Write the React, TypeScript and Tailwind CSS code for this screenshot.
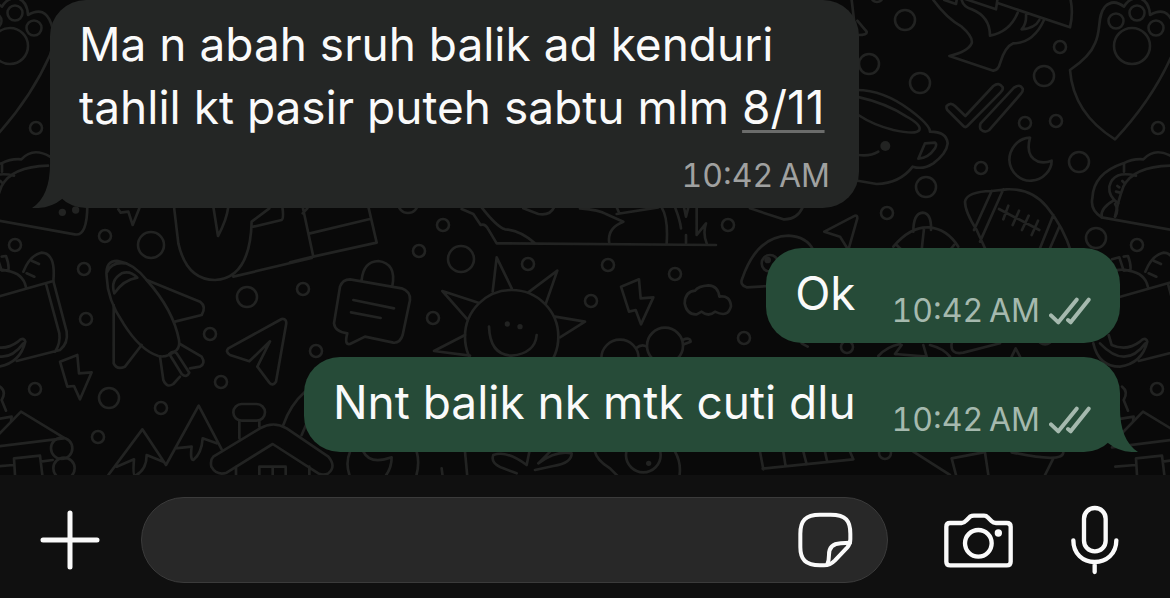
import type { ReactNode } from "react";

type Circle = [x: number, y: number, r: number];

const bubbles: Circle[] = [
  [105, 236, 6], [84, 269, 6], [86, 319, 6], [210, 334, 6], [221, 382, 6],
  [161, 408, 6], [98, 437, 6], [303, 289, 6], [151, 245, 13], [247, 297, 10],
  [109, 398, 10], [443, 225, 6], [419, 251, 6], [461, 259, 13], [528, 264, 6],
  [433, 318, 6], [316, 351, 6], [408, 203, 10], [591, 301, 6], [728, 225, 6],
  [608, 265, 6], [675, 274, 6], [744, 338, 6], [847, 347, 6], [905, 20, 10],
  [869, 64, 10], [920, 83, 10], [1060, 47, 6], [1044, 76, 10], [1025, 123, 6],
  [1056, 121, 6], [1079, 162, 10], [981, 168, 6], [926, 187, 10], [887, 213, 6],
  [1096, 238, 10], [885, 453, 6], [877, -4, 6],
];

// Everything that shows up at both edges of the wallpaper, one period apart
function EdgeDoodles() {
  return (
    <>
      <g strokeWidth="2.6">
        <circle cx="36" cy="128" r="6" />
        <circle cx="15" cy="245" r="6" />
        <circle cx="35" cy="389" r="6" />
        <circle cx="10" cy="46" r="18" />
        <circle cx="15" cy="13" r="7.5" />
        <circle cx="34" cy="28" r="7.5" />
        <circle cx="-6" cy="21" r="7.5" />
      </g>
      <g transform="translate(-272 0) scale(.33333)">
        <path d="M795 418Q670 340 660 210Q720 170 735 130C755 90 740 50 765 20Q790 -5 822 20Q840 -10 870 -5Q898 5 900 45Q950 15 970 72Q985 110 966 165Q906 300 795 418Z" />
        <path d="M755 652Q720 630 727 595Q730 520 820 490Q850 475 880 478Q915 440 966 470L1010 470M795 650Q805 600 820 560Q850 500 960 497M755 652L1040 703Q1078 710 1078 615" />
        <path d="M858 527Q790 510 778 560Q775 590 805 610M822 490V515M755 652Q750 625 790 602M795 650Q808 630 795 612M802 558L808 562M798 575L810 578M817 543L824 550" />
        <g fill="#222322" stroke="none">
          <circle cx="1003" cy="637" r="11" />
          <circle cx="1043" cy="630" r="11" />
        </g>
      </g>
      <g transform="translate(0 200) scale(.33333)">
        <path d="M-50 303L160 243Q168 160 125 158Q90 165 70 215M-30 215Q-5 205 20 212Q70 220 78 262M95 182L117 192M80 220L103 230M5 170L18 168Q28 195 25 210L5 212L-8 172L-30 178" />
        <path d="M160 243L200 395Q205 430 180 450L50 483M138 252L178 400Q182 430 165 455" />
        <path d="M-86 430Q-70 500 -6 500Q60 490 76 425Q70 408 54 425Q14 455 -31 435L-40 405M-66 430Q10 510 70 430" />
        <path d="M180 485L232 465L237 520L275 517L240 598L222 558L202 560Z" />
        <path d="M-20 720L63 635L190 712M-30 742L190 715M-20 800L40 795M45 825L42 775L120 767L127 825M122 785L158 780" />
        <path d="M0 560Q20 575 5 600L18 632M-15 658L35 650L33 665" />
        <circle cx="185" cy="745" r="32" />
        <circle cx="192" cy="805" r="32" />
      </g>
    </>
  );
}

function Wallpaper() {
  return (
    <svg
      className="absolute inset-0 h-full w-full"
      viewBox="0 0 1170 475"
      preserveAspectRatio="xMidYMin slice"
      fill="none"
      stroke="#222322"
      strokeWidth="8"
      strokeLinecap="round"
      strokeLinejoin="round"
      aria-hidden="true"
    >
      {bubbles.map(([x, y, r]) => (
        <circle key={`${x}-${y}`} cx={x} cy={y} r={r} strokeWidth="2.6" />
      ))}

      <EdgeDoodles />
      <g transform="translate(1122 0)">
        <EdgeDoodles />
      </g>

      {/* bird, ticks, cup, moon, football */}
      <g transform="translate(850 0) scale(.33333)">
        <path d="M250 0Q290 55 335 80Q370 110 365 130Q355 155 298 168L430 212Q445 210 450 190Q465 140 490 130Q550 130 582 60M335 0Q340 20 365 28Q420 50 420 107Q480 95 503 38M445 10L660 82Q670 40 662 0M340 -5L438 28L442 0M528 45Q530 70 515 88Q555 85 568 60M283 0L318 12L320 0" />
        <path d="M5 0L12 60M22 62L50 95Q52 105 25 105" />
        <path d="M290 318Q302 305 315 318L346 348L430 258Q447 245 458 262Q460 270 452 277L352 378Q346 384 340 378L292 330Q288 324 290 318ZM392 370L492 263Q510 250 518 266Q520 274 513 281L418 390Q404 400 392 388Q388 380 392 370Z" />
        <path d="M20 270Q100 270 180 330Q240 375 240 395Q290 395 293 430Q290 460 250 490Q220 510 188 500Q150 550 80 552L10 540M20 290Q110 310 170 350Q215 375 208 390Q200 405 130 390Q70 375 25 345M225 430L255 428Q262 432 255 445Q235 475 205 476ZM25 465Q60 470 85 455" />
        <circle cx="106" cy="438" r="15" fill="#222322" stroke="none" />
        <path d="M540 413C500 415 478 450 478 480C480 520 515 545 545 542C580 540 605 510 605 482Q585 490 565 485Q525 470 540 413Z" />
        <path d="M405 745L380 690Q345 635 345 605Q350 575 425 573L470 568Q545 565 590 620Q640 680 665 760M425 573L372 690M460 568L390 725M610 645L570 745M628 680L600 745M447 627L568 690M475 617L460 658M507 632L488 675M536 647L516 690M564 662L545 705" />
        <path d="M190 695Q190 640 218 638Q245 640 243 690M130 740Q180 680 235 682Q290 685 325 740M222 685L215 750M140 735L155 750M312 735L300 750" />
      </g>

      {/* rocket, paper plane, trees, cabin */}
      <g transform="translate(0 200) scale(.33333)">
        <path d="M320 230Q315 180 355 183Q400 190 440 240Q520 330 537 420Q540 440 530 450Q500 475 475 468Q420 450 370 370Q322 300 320 230ZM343 280Q330 240 365 220Q390 210 412 233Q370 240 343 280ZM322 215Q335 185 375 190" />
        <path d="M440 240L600 305Q620 320 605 345L525 365M341 315V490Q350 510 375 500L425 435M480 470L490 540Q500 565 520 552L540 530M540 432L605 470Q618 490 600 500L570 505M508 462L545 522Q560 535 568 518L530 460Q518 450 508 462" />
        <path d="M685 445L845 357Q862 355 858 375L828 545Q818 560 808 548L772 500L810 424L748 484L690 465Q675 455 685 445Z" />
        <path d="M522 20L535 130Q560 240 645 240Q750 235 755 65L808 25M640 20L654 108Q680 60 685 20M760 80L845 60Q852 55 847 20M700 230L935 174M355 28L362 38L385 35L398 75L418 25" />
        <path d="M325 825L427 688L498 795L596 617L665 748M350 800L402 778Q398 825 405 828Q440 810 440 765L490 785M525 745L575 740Q570 780 580 780Q605 760 608 715L650 730" />
        <path d="M640 770L780 685Q820 662 860 685L985 770Q1010 800 985 820Q970 828 955 820L818 732L680 818Q650 828 634 800Q630 780 640 770ZM718 662V715M778 662V680M708 800V825M778 825V800H857V825M818 800V825M928 800V825M850 675Q870 615 915 575M905 705L920 670" />
        <rect x="700" y="612" width="95" height="50" rx="25" />
      </g>

      {/* lock chat, mountain base, sun */}
      <g transform="translate(290 200) scale(.33333)">
        <path d="M38 20L70 170L0 187M235 20L260 128L70 170M60 100L240 57M38 40L52 25" />
        <path d="M215 240Q220 185 265 183Q320 190 307 258M180 238L335 265Q362 275 360 300L338 405Q330 430 310 428L225 410L180 432Q162 435 172 400Q135 395 132 370L150 260Q158 238 180 238ZM190 300L312 325M183 337L272 354" />
        <path d="M515 27L550 42L572 75Q585 70 595 88L620 130L1278 135M575 22Q620 80 645 88Q690 90 735 130M700 25L745 42Q780 48 792 22" />
        <circle cx="665" cy="410" r="140" />
        <path d="M608 275L620 172L665 265M715 277L802 212L767 312M795 350L885 365L810 412M565 308L457 273L532 358M525 405L432 453L540 467M597 380Q600 465 665 467Q735 460 740 405" />
        <g fill="#222322" stroke="none">
          <circle cx="652" cy="372" r="8" />
          <circle cx="690" cy="380" r="8" />
        </g>
      </g>

      {/* grass, cloud, bolt, glasses, whale */}
      <g transform="translate(580 200) scale(.33333)">
        <path d="M0 25Q60 30 78 42L130 65Q80 85 88 130M110 42L235 22M110 22L118 40M245 22Q265 55 260 130M285 22Q300 60 303 85M312 22L318 50L325 22M318 105V130M350 22V105L378 70Q368 100 380 130M510 25L610 58Q650 60 668 22" />
        <path d="M123 260L177 238L182 295L220 292L183 373L167 330L147 335Z" />
        <path d="M345 272Q315 275 314 310Q320 345 350 343L365 335Q385 352 405 335Q445 355 453 318Q450 285 418 290Q415 258 385 256Q355 258 345 272Z" />
        <circle cx="120" cy="475" r="56" />
        <circle cx="255" cy="437" r="54" />
        <path d="M168 445Q185 430 200 440M308 420Q330 410 332 425L312 433" />
        <path d="M570 258L500 262Q478 255 487 235Q530 110 625 107Q680 110 700 150M733 95L825 47Q832 45 832 55L805 150L780 110ZM665 430L683 440" />
        <circle cx="570" cy="190" r="25" />
        <circle cx="563" cy="180" r="10" fill="#222322" stroke="none" />
      </g>

      {/* strip between and below the outgoing messages */}
      <g transform="translate(750 230) scale(.33333)">
        <path d="M385 378Q410 350 450 342M435 372L455 345M435 372L530 380L520 345M540 345Q580 355 600 380M605 340Q600 375 640 368L750 340M785 380L797 355L810 380M870 338Q885 348 900 338" />
        <path d="M30 665L40 718M100 665L107 710M160 665L170 703M225 665L232 697M300 665L310 688L38 716M490 665L600 735M605 685L700 667M605 685L618 735M785 667Q940 700 940 667M910 685L885 735M705 667L715 735" />
      </g>
      <g transform="translate(290 340) scale(.33333)">
        <path d="M180 335Q165 370 180 410M220 335Q240 375 305 352Q305 385 285 410M380 335Q390 370 378 410M525 335L532 410M455 385L458 410M680 400L640 385Q600 370 610 345Q650 330 710 375L718 335M745 370L780 335M745 370Q800 330 845 340Q845 370 790 378L735 390M915 335Q920 360 960 385L985 410M1155 335Q1175 370 1168 410" />
        <circle cx="1060" cy="345" r="52" />
        <circle cx="1076" cy="370" r="8" fill="#222322" stroke="none" />
      </g>
    </svg>
  );
}

function Tail({ className }: { className: string }) {
  return (
    <svg
      className={`absolute bottom-0 h-12 w-10 ${className}`}
      viewBox="0 0 40 48"
      fill="currentColor"
      aria-hidden="true"
    >
      <path d="M18 0Q19 36 0 48Q18 49 30 39L40 30V0Z" />
    </svg>
  );
}

function ReadTicks() {
  return (
    <svg
      className="ml-[9px] h-7 w-[42px]"
      viewBox="898 195 126 84"
      fill="none"
      stroke="currentColor"
      strokeWidth="12"
      strokeLinecap="round"
      strokeLinejoin="round"
      role="img"
      aria-label="Delivered"
    >
      <path d="M904 250L926 271L981 203M955 264L963 271L1017 203" />
    </svg>
  );
}

interface OutgoingProps {
  children: ReactNode;
  time: string;
  tail?: boolean;
}

function Outgoing({ children, time, tail = false }: OutgoingProps) {
  return (
    <li className="relative flex items-end self-end rounded-[36px] bg-[#264b38] pt-[14px] pr-[29px] pb-[18px] pl-[29px]">
      <p className="mr-9">{children}</p>
      <div className="flex shrink-0 text-[32px] leading-7 text-[#a5b9ae] tabular-nums">
        <time>{time}</time>
        <ReadTicks />
      </div>
      {tail && <Tail className="-right-[18px] -scale-x-100 text-[#264b38]" />}
    </li>
  );
}

function Composer() {
  return (
    <footer className="flex items-center bg-[#101010] pt-[22px] pr-[51px] pb-[15px] pl-10">
      <button type="button" aria-label="Attach" className="text-[#fafafa]">
        <svg className="size-[60px]" viewBox="0 0 60 60" fill="none" stroke="currentColor" strokeWidth="5" strokeLinecap="round">
          <path d="M30 3V57M3 30H57" />
        </svg>
      </button>
      <div className="mr-14 ml-[41px] flex h-[86px] min-w-0 flex-1 items-center rounded-full border border-[#3b3b3b] bg-[#282828] pr-[34px] pl-8">
        <input
          type="text"
          aria-label="Message"
          className="min-w-0 flex-1 bg-transparent text-[#fafafa] outline-none"
        />
        <button type="button" aria-label="Stickers" className="text-[#fafafa]">
          <svg className="h-14 w-[55px]" viewBox="114 130 165 168" fill="none" stroke="currentColor" strokeWidth="12" strokeLinecap="round" strokeLinejoin="round">
            <path d="M180 138H212C258 138 271 156 271 195V212Q271 226 262 236L225 275Q210 290 192 290H180C136 290 121 272 121 235V195C121 156 136 138 180 138Z" />
            <path d="M270 222L242 224Q207 226 207 258Q207 275 202 287" />
          </svg>
        </button>
      </div>
      <button type="button" aria-label="Camera" className="mr-[58px] text-[#fafafa]">
        <svg className="h-[55px] w-[69px]" viewBox="552 127 207 165" fill="none" stroke="currentColor" strokeWidth="13" strokeLinejoin="round">
          <path d="M570 157H605Q612 157 618 150L630 138Q635 135 642 135H672Q679 135 683 140L695 152Q700 157 708 157H740Q752 157 752 168V273Q752 284 740 284H571Q559 284 559 273V168Q559 157 570 157Z" />
          <circle cx="655" cy="218" r="40" />
          <circle cx="715" cy="187" r="11" fill="currentColor" stroke="none" />
        </svg>
      </button>
      <button type="button" aria-label="Record voice message" className="text-[#fafafa]">
        <svg className="h-[70px] w-12" viewBox="934 103 144 210" fill="none" stroke="currentColor" strokeWidth="13" strokeLinecap="round">
          <rect x="973" y="112" width="65" height="130" rx="32" />
          <path d="M941 209C941 250 970 274 1005 274C1040 274 1070 250 1070 209M1005 274V304" />
        </svg>
      </button>
    </footer>
  );
}

// hour and period are joined by a narrow no-break space
const sentAt = "10:42\u202fAM";

export default function App() {
  return (
    <div className="flex min-h-screen flex-col bg-[#090909] font-['Inter','Liberation_Sans',sans-serif]">
      <main className="relative flex-1 overflow-hidden px-[50px] pb-[23px]">
        <Wallpaper />
        <ul className="relative flex flex-col text-[46px] leading-[63px] text-[#fafafa]">
          <li className="relative mb-10 w-full max-w-[809px] rounded-[36px] bg-[#242625] px-[29px] pt-[13px] pb-[18px]">
            <p>
              Ma n abah sruh balik ad kenduri tahlil kt pasir puteh sabtu mlm{" "}
              <a
                href="#event"
                className="underline decoration-[#6b6c6b] decoration-[3px] underline-offset-[6px]"
              >
                8/11
              </a>
            </p>
            <time className="mt-[23px] block text-right text-[32px] leading-7 text-[#a0a1a0] tabular-nums">
              {sentAt}
            </time>
            <Tail className="-left-[18px] text-[#242625]" />
          </li>
          <Outgoing time={sentAt}>Ok</Outgoing>
          <li className="h-[14px]" aria-hidden="true" />
          <Outgoing time={sentAt} tail>
            Nnt balik nk mtk cuti dlu
          </Outgoing>
        </ul>
      </main>
      <Composer />
    </div>
  );
}
